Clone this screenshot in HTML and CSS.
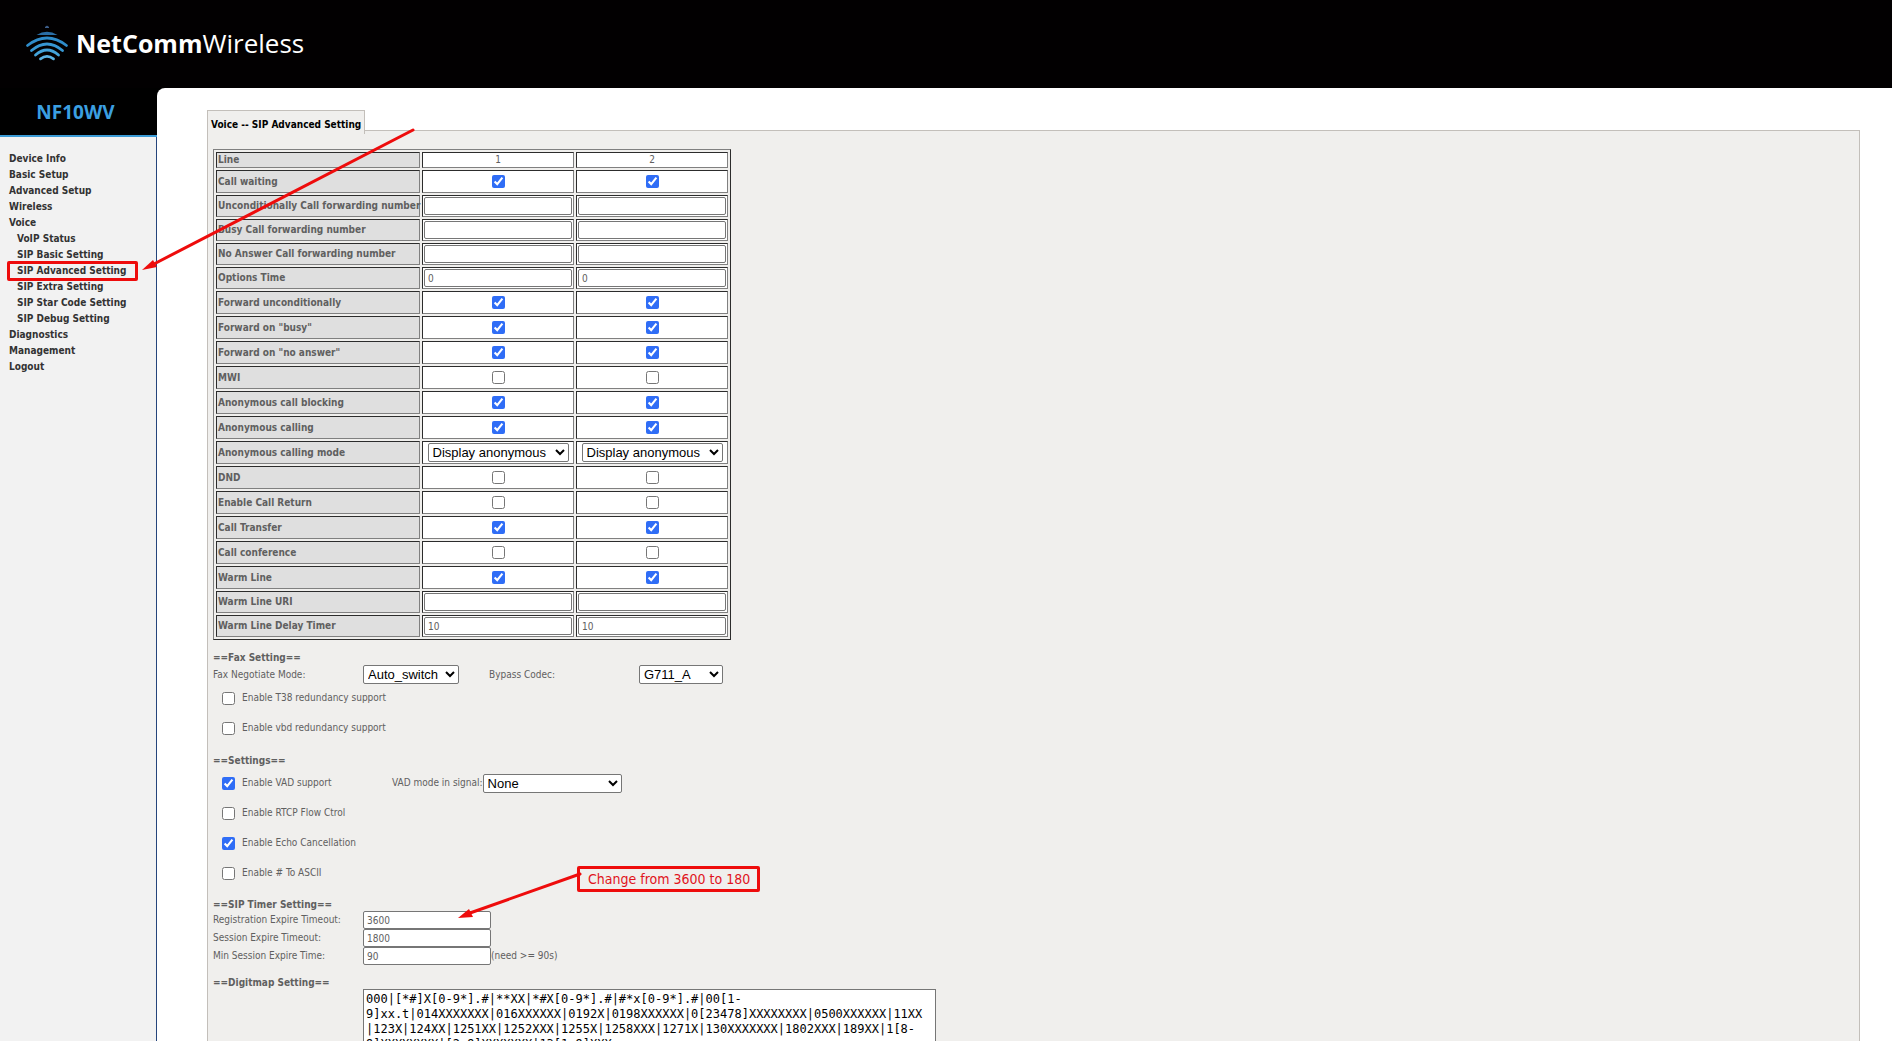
FILE: index.html
```html
<!DOCTYPE html>
<html lang="en">
<head>
<meta charset="utf-8">
<title>NetCommWireless NF10WV</title>
<link rel="stylesheet" href="styles.css">
</head>
<body>
<header class="banner">
  <svg class="logo-mark" width="44" height="38" viewBox="0 0 44 38" fill="none" stroke-linecap="round" aria-hidden="true">
    <path d="M20 3.500L22 2L24 3.500Z" fill="#3d5f8c" stroke="#3d5f8c" stroke-linecap="butt"/>
    <path d="M11.500 11Q22 4.500 32.500 11Z" fill="#2a6ea6"/>
    <g stroke-width="2.800">
      <path d="M2.500 21.500Q22 6.500 41.500 21.500" stroke="#2f8cca"/>
      <path d="M6.500 26.500Q22 13.500 37.500 26.500" stroke="#3797d3"/>
      <path d="M10.500 31Q22 21 33.500 31" stroke="#43a3da"/>
      <path d="M15.500 34.800Q22 30 28.500 34.800" stroke="#5bb2e2"/>
    </g>
  </svg>
  <span class="brand"><b>NetComm</b>Wireless</span>
</header>
<div class="shell">
  <aside class="side">
    <div class="model">NF10WV</div>
    <nav class="menu">
      <a href="#">Device Info</a>
      <a href="#">Basic Setup</a>
      <a href="#">Advanced Setup</a>
      <a href="#">Wireless</a>
      <a href="#">Voice</a>
      <a class="sub" href="#">VoIP Status</a>
      <a class="sub" href="#">SIP Basic Setting</a>
      <a class="sub current" href="#">SIP Advanced Setting</a>
      <a class="sub" href="#">SIP Extra Setting</a>
      <a class="sub" href="#">SIP Star Code Setting</a>
      <a class="sub" href="#">SIP Debug Setting</a>
      <a href="#">Diagnostics</a>
      <a href="#">Management</a>
      <a href="#">Logout</a>
    </nav>
  </aside>
  <main class="content">
    <h1 class="tab">Voice -- SIP Advanced Setting</h1>
    <form class="panel">
      <table class="lines">
        <colgroup><col class="c-name"><col class="c-line"><col class="c-line"></colgroup>
        <tr class="head"><th scope="row">Line</th><td>1</td><td>2</td></tr>
        <tr class="tick"><th scope="row">Call waiting</th><td><input type="checkbox" aria-label="Call waiting 1" checked></td><td><input type="checkbox" aria-label="Call waiting 2" checked></td></tr>
        <tr class="entry"><th scope="row">Unconditionally Call forwarding number</th><td><input type="text" aria-label="Unconditional number 1"></td><td><input type="text" aria-label="Unconditional number 2"></td></tr>
        <tr class="entry"><th scope="row">Busy Call forwarding number</th><td><input type="text" aria-label="Busy number 1"></td><td><input type="text" aria-label="Busy number 2"></td></tr>
        <tr class="entry"><th scope="row">No Answer Call forwarding number</th><td><input type="text" aria-label="No answer number 1"></td><td><input type="text" aria-label="No answer number 2"></td></tr>
        <tr class="entry"><th scope="row">Options Time</th><td><input type="text" aria-label="Options Time 1" value="0"></td><td><input type="text" aria-label="Options Time 2" value="0"></td></tr>
        <tr class="tick"><th scope="row">Forward unconditionally</th><td><input type="checkbox" aria-label="Forward unconditionally 1" checked></td><td><input type="checkbox" aria-label="Forward unconditionally 2" checked></td></tr>
        <tr class="tick"><th scope="row">Forward on "busy"</th><td><input type="checkbox" aria-label="Forward on busy 1" checked></td><td><input type="checkbox" aria-label="Forward on busy 2" checked></td></tr>
        <tr class="tick"><th scope="row">Forward on "no answer"</th><td><input type="checkbox" aria-label="Forward on no answer 1" checked></td><td><input type="checkbox" aria-label="Forward on no answer 2" checked></td></tr>
        <tr class="tick"><th scope="row">MWI</th><td><input type="checkbox" aria-label="MWI 1"></td><td><input type="checkbox" aria-label="MWI 2"></td></tr>
        <tr class="tick"><th scope="row">Anonymous call blocking</th><td><input type="checkbox" aria-label="Anonymous call blocking 1" checked></td><td><input type="checkbox" aria-label="Anonymous call blocking 2" checked></td></tr>
        <tr class="tick"><th scope="row">Anonymous calling</th><td><input type="checkbox" aria-label="Anonymous calling 1" checked></td><td><input type="checkbox" aria-label="Anonymous calling 2" checked></td></tr>
        <tr class="tick"><th scope="row">Anonymous calling mode</th><td><select class="w-mode" aria-label="Anonymous calling mode 1"><option>Display anonymous</option></select></td><td><select class="w-mode" aria-label="Anonymous calling mode 2"><option>Display anonymous</option></select></td></tr>
        <tr class="tick"><th scope="row">DND</th><td><input type="checkbox" aria-label="DND 1"></td><td><input type="checkbox" aria-label="DND 2"></td></tr>
        <tr class="tick"><th scope="row">Enable Call Return</th><td><input type="checkbox" aria-label="Enable Call Return 1"></td><td><input type="checkbox" aria-label="Enable Call Return 2"></td></tr>
        <tr class="tick"><th scope="row">Call Transfer</th><td><input type="checkbox" aria-label="Call Transfer 1" checked></td><td><input type="checkbox" aria-label="Call Transfer 2" checked></td></tr>
        <tr class="tick"><th scope="row">Call conference</th><td><input type="checkbox" aria-label="Call conference 1"></td><td><input type="checkbox" aria-label="Call conference 2"></td></tr>
        <tr class="tick"><th scope="row">Warm Line</th><td><input type="checkbox" aria-label="Warm Line 1" checked></td><td><input type="checkbox" aria-label="Warm Line 2" checked></td></tr>
        <tr class="entry"><th scope="row">Warm Line URI</th><td><input type="text" aria-label="Warm Line URI 1"></td><td><input type="text" aria-label="Warm Line URI 2"></td></tr>
        <tr class="entry"><th scope="row">Warm Line Delay Timer</th><td><input type="text" aria-label="Warm Line Delay Timer 1" value="10"></td><td><input type="text" aria-label="Warm Line Delay Timer 2" value="10"></td></tr>
      </table>

      <section class="group">
        <h2>==Fax Setting==</h2>
        <div class="fax">
          <label for="fax">Fax Negotiate Mode:</label>
          <select id="fax" class="w-fax"><option>Auto_switch</option></select>
          <label for="codec">Bypass Codec:</label>
          <select id="codec" class="w-codec"><option>G711_A</option></select>
        </div>
        <div class="check"><label><input type="checkbox">Enable T38 redundancy support</label></div>
        <div class="check"><label><input type="checkbox">Enable vbd redundancy support</label></div>
      </section>

      <section class="group">
        <h2>==Settings==</h2>
        <div class="check">
          <label class="first"><input type="checkbox" checked>Enable VAD support</label>
          <label for="vad">VAD mode in signal:</label><select id="vad" class="w-vad"><option>None</option></select>
        </div>
        <div class="check"><label><input type="checkbox">Enable RTCP Flow Ctrol</label></div>
        <div class="check"><label><input type="checkbox" checked>Enable Echo Cancellation</label></div>
        <div class="check"><label><input type="checkbox">Enable # To ASCII</label></div>
      </section>

      <section class="group timers">
        <h2>==SIP Timer Setting==</h2>
        <div class="timer"><label for="reg">Registration Expire Timeout:</label><input id="reg" type="text" value="3600"></div>
        <div class="timer"><label for="ses">Session Expire Timeout:</label><input id="ses" type="text" value="1800"></div>
        <div class="timer"><label for="min">Min Session Expire Time:</label><input id="min" type="text" value="90"><span>(need &gt;= 90s)</span></div>
      </section>

      <section class="group digits">
        <h2><label for="map">==Digitmap Setting==</label></h2>
        <textarea id="map" rows="6">000|[*#]X[0-9*].#|**XX|*#X[0-9*].#|#*x[0-9*].#|00[1-
9]xx.t|014XXXXXXX|016XXXXXX|0192X|0198XXXXXX|0[23478]XXXXXXXX|0500XXXXXX|11XX
|123X|124XX|1251XX|1252XXX|1255X|1258XXX|1271X|130XXXXXXX|1802XXX|189XX|1[8-
9]XXXXXXXX|[2-9]XXXXXXX|13[1-9]XXX</textarea>
      </section>
    </form>
  </main>
</div>
<div class="note note-menu"></div>
<div class="note note-timer">Change from 3600 to 180</div>
<svg class="arrows" width="780" height="940" viewBox="0 0 780 940" aria-hidden="true">
  <g stroke="#ee0c0c" stroke-width="3" stroke-linecap="round" fill="#ee0c0c">
    <path d="M413 130L152 265"/>
    <path d="M142 270L153 260L157 267Z" stroke="none"/>
    <path d="M580 874L470 913"/>
    <path d="M458 918L469 909L473 917Z" stroke="none"/>
  </g>
</svg>
</body>
</html>
```
FILE: styles.css
```css
* { box-sizing: border-box; }
html { background: #fff; }
body {
  position: relative;
  margin: 0;
  color: #606060;
  font: 10px/16px "DejaVu Sans Condensed", "DejaVu Sans", sans-serif;
}
h1, h2 { margin: 0; font-size: 10px; }

.banner {
  display: flex;
  align-items: center;
  gap: 7px;
  height: 88px;
  padding: 0 0 2px 25px;
  background: #020001;
}
.logo-mark { flex: none; }
.brand { color: #fff; font: 26px/32px "Open Sans", sans-serif; }
.brand b { font-size: 25px; }

.shell {
  display: flex;
  min-height: calc(100vh - 88px);
  background: linear-gradient(#000, #000) 0 0 / 170px 20px no-repeat;
}
.side {
  flex: none;
  width: 157px;
  background: #f2f2f2;
  border-right: 1px solid #25457c;
}
.model {
  height: 49px;
  margin-right: -1px;
  padding-right: 6px;
  background: #000;
  border-bottom: 2px solid #3b9bd6;
  color: #3b9fe0;
  font: bold 19px/49px "Open Sans", sans-serif;
  text-align: center;
}
.menu { display: flex; flex-direction: column; padding: 14px 0 0 9px; }
.menu a { color: #333; font-weight: bold; text-decoration: none; }
.menu .sub { padding-left: 8px; }

.content {
  flex: 1;
  min-width: 0;
  padding: 22px 32px 0 50px;
  background: #fff;
  border-top-left-radius: 8px;
}
.tab {
  position: relative;
  width: fit-content;
  height: 24px;
  margin-bottom: -4px;
  padding: 0 3px;
  background: #f0efed;
  border: 1px solid #c3bfba;
  border-width: 1px 1px 0;
  color: #000;
  line-height: 28px;
}
.panel {
  padding: 18px 5px;
  background: #f0efed;
  border: 1px solid #c3bfba;
}

input[type="checkbox"] { flex: none; width: 13px; height: 13px; margin: 0; accent-color: #2f6df6; }
input[type="text"] {
  height: 18px;
  padding: 1px 3px;
  background: #fff;
  border: 1px solid #767676;
  border-radius: 2px;
  color: #606060;
  font: inherit;
}
select {
  height: 19px;
  padding: 0;
  background: #fff;
  border: 1px solid #767676;
  border-radius: 2px;
  color: #000;
  font: 13px "Liberation Sans", sans-serif;
}
.w-mode { width: 141px; }
.w-fax { width: 96px; }
.w-codec { width: 84px; }
.w-vad { width: 139px; }

.lines {
  width: 518px;
  table-layout: fixed;
  border: 1px solid;
  border-color: #808080 #2c2c2c #2c2c2c #808080;
  border-spacing: 2px;
}
.c-name { width: 204px; }
.c-line { width: 152px; }
.lines th, .lines td {
  padding: 0 1px;
  border: 1px solid;
  border-color: #2c2c2c #808080 #808080 #2c2c2c;
}
.lines th { background: #dfdfdf; text-align: left; white-space: nowrap; }
.lines td { background: #fff; text-align: center; }
.lines td input, .lines td select { display: block; margin: 0 auto; }
.lines td input[type="checkbox"] { margin: 0 auto; }
.lines td input[type="text"] { width: 148px; }
.head { height: 16px; line-height: 14px; }
.tick { height: 23px; }
.entry { height: 22px; }

.group { padding-top: 11px; }
.group h2 { line-height: 14px; }
.fax {
  display: grid;
  grid-template-columns: 150px 126px 150px auto;
  align-items: center;
  justify-content: start;
  height: 18px;
}
.check { display: flex; align-items: center; height: 30px; padding-left: 9px; }
.check label { display: flex; align-items: center; gap: 7px; }
.check .first { width: 170px; }
.timers h2 { line-height: 12px; }
.timer { display: flex; align-items: center; height: 18px; }
.timer label { width: 150px; }
.timer input { width: 128px; }
.digits textarea {
  display: block;
  width: 573px;
  margin: -1px 0 0 150px;
  padding: 2px;
  background: #fff;
  border: 1px solid #767676;
  border-radius: 0;
  color: #000;
  font: 12px/15px "DejaVu Sans Mono", monospace;
  white-space: pre;
  overflow: hidden;
  resize: none;
}

.note { position: absolute; border: 3px solid #ee0c0c; border-radius: 2px; }
.note-menu { left: 7px; top: 261px; width: 131px; height: 20px; }
.note-timer {
  left: 577px;
  top: 866px;
  padding: 0 7px 0 8px;
  color: #e0141c;
  font-size: 14px;
  line-height: 20px;
}
.arrows { position: absolute; left: 0; top: 0; pointer-events: none; }
```
